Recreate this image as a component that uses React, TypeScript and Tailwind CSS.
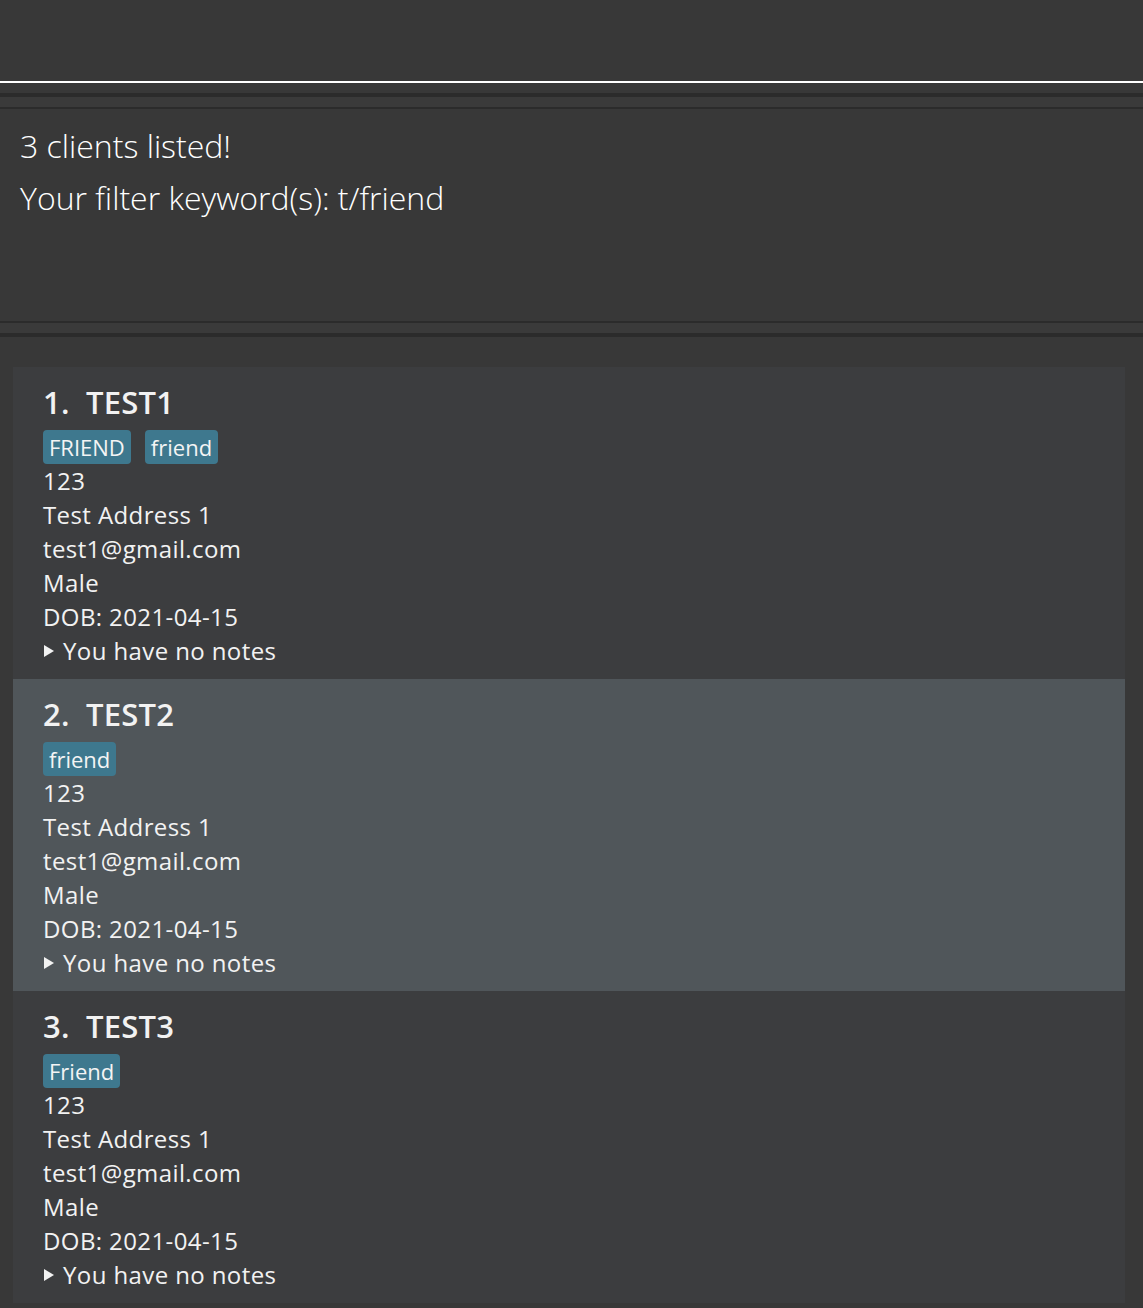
import React from "react";

type Client = { idx: number; name: string; tags: string[]; selected?: boolean };

const clients: Client[] = [
  { idx: 1, name: "TEST1", tags: ["FRIEND", "friend"] },
  { idx: 2, name: "TEST2", tags: ["friend"], selected: true },
  { idx: 3, name: "TEST3", tags: ["Friend"] },
];

function Card({ c }: { c: Client }) {
  return (
    <div
      className={`${c.selected ? "bg-[#50565a]" : "bg-[#3c3d3f]"} h-[312px] pl-[30px] pt-[14px] text-[#f2f2f2]`}
    >
      <div className="h-[44px] text-[31px] font-semibold leading-[42px] tracking-[0.2px] whitespace-pre">
        {`${c.idx}.  ${c.name}`}
      </div>
      <div className="mt-[5px] flex gap-[14px]">
        {c.tags.map((t) => (
          <span
            key={t}
            className="h-[34px] rounded-[4px] bg-[#3e788e] px-[6px] text-[22px] leading-[34px] text-[#f4f4f4]"
          >
            {t}
          </span>
        ))}
      </div>
      <div className="text-[24px] leading-[34px] tracking-[0.4px]">
        <div>123</div>
        <div>Test Address 1</div>
        <div>test1@gmail.com</div>
        <div>Male</div>
        <div>DOB: 2021-04-15</div>
        <div className="flex items-center">
          <span className="mr-[9px] ml-[1px] inline-block h-0 w-0 border-y-[6px] border-l-[10px] border-y-transparent border-l-[#f2f2f2]" />
          You have no notes
        </div>
      </div>
    </div>
  );
}

export default function App() {
  return (
    <div
      className="h-[1308px] w-[1143px] overflow-hidden bg-[#383838]"
      style={{ fontFamily: '"Open Sans", "Noto Sans", sans-serif' }}
    >
      <div className="h-[81px] bg-[#383838]" />
      <div className="h-[2px] bg-white" />
      <div className="h-[10px] bg-[#383838]" />
      <div className="h-[4px] bg-[#2b2b2b]" />
      <div className="h-[10px] bg-[#3a3a3a]" />
      <div className="h-[2px] bg-[#2b2b2b]" />
      <div className="h-[212px] bg-[#383838] pl-[20px] pt-[11px] text-[32px] font-light leading-[52px] text-white">
        <div>3 clients listed!</div>
        <div>Your filter keyword(s): t/friend</div>
      </div>
      <div className="h-[2px] bg-[#2b2b2b]" />
      <div className="h-[10px] bg-[#3a3a3a]" />
      <div className="h-[4px] bg-[#2b2b2b]" />
      <div className="pl-[13px] pr-[18px] pt-[30px]">
        {clients.map((c) => (
          <Card key={c.idx} c={c} />
        ))}
      </div>
    </div>
  );
}
